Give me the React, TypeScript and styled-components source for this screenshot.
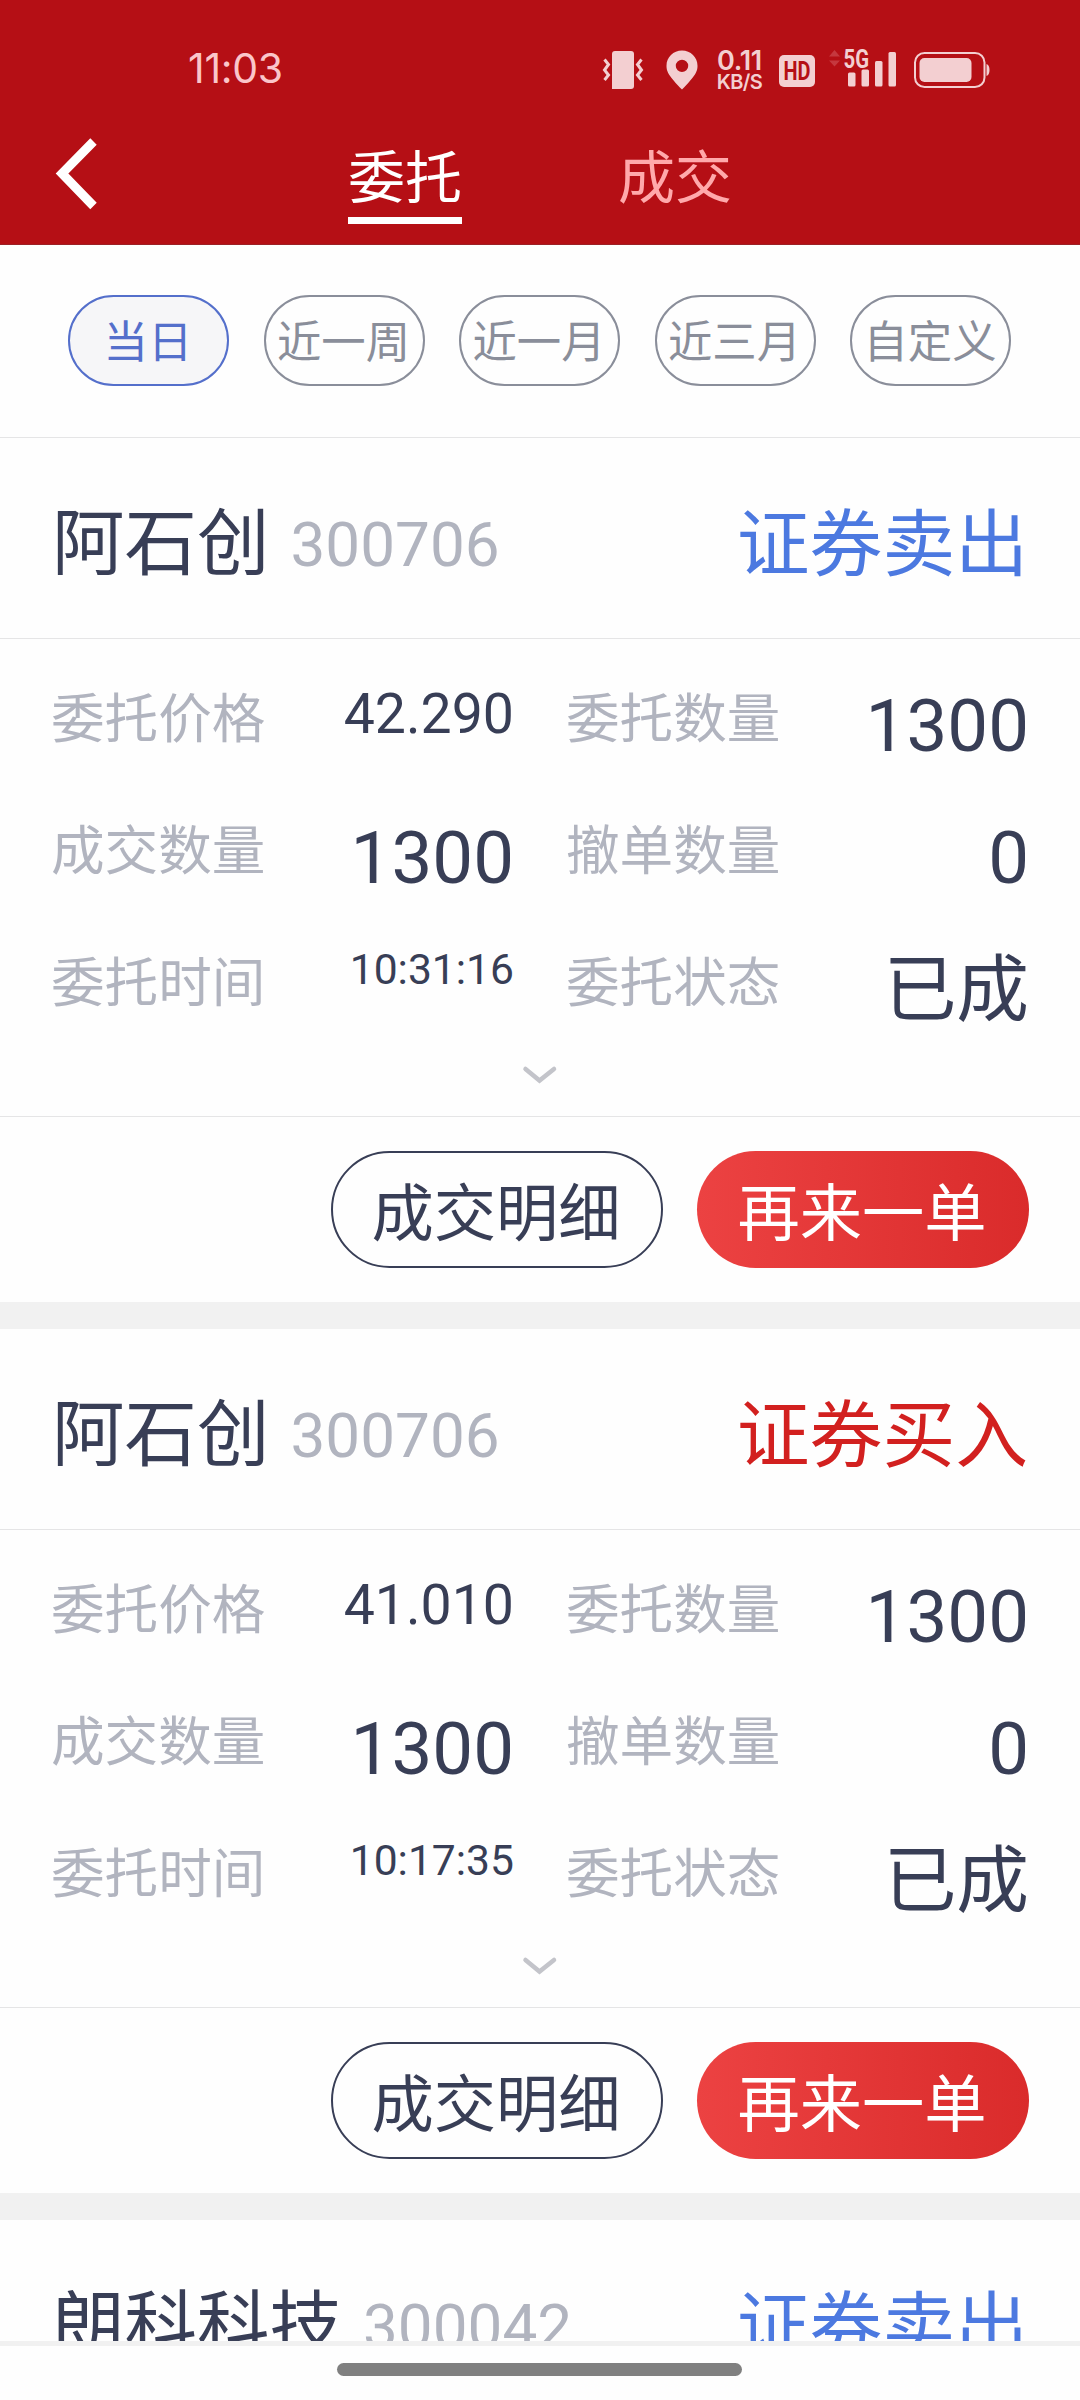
import React from "react";
import styled, { createGlobalStyle } from "styled-components";

const color = {
  brand: "#b50f15",
  status: "#f3cfd1",
  ink: "#383e56",
  muted: "#b1b4bf",
  line: "#e5e5e6",
  gap: "#f1f1f1",
  sell: "#4c79e0",
  buy: "#d2201f",
  chip: "#8a8e9a",
  chipActive: "#546fcb",
};

const GlobalStyle = createGlobalStyle`
  * { box-sizing: border-box; }
  body {
    margin: 0;
    background: #fefefe;
    font-family: Roboto, "Noto Sans CJK SC", sans-serif;
    -webkit-font-smoothing: antialiased;
  }
  button { font-family: inherit; padding: 0; margin: 0; background: none; border: 0; }
`;

const Screen = styled.div`
  width: 1080px;
  height: 2400px;
  display: flex;
  flex-direction: column;
  overflow: hidden;
  background: #fefefe;
`;

const Header = styled.header`
  height: 245px;
  flex: none;
  background: ${color.brand};
  border-bottom: 1px solid #9c2126;
`;

const StatusBar = styled.div`
  height: 130px;
  padding: 9px 89px 0 188px;
  display: flex;
  align-items: center;
  justify-content: space-between;
  color: ${color.status};
`;

const Clock = styled.span`
  font: 400 41px/60px Inter, sans-serif;
  letter-spacing: -0.3px;
  margin-bottom: 3px;
  color: #fbc6ca;
`;

const StatusIcons = styled.div`
  display: flex;
  align-items: center;
  height: 44px;
`;

const Glyph = styled.svg<{ $left?: number; $top?: number }>`
  display: block;
  flex: none;
  overflow: visible;
  margin-left: ${(p) => p.$left ?? 0}px;
  margin-top: ${(p) => p.$top ?? 0}px;
`;

const NetSpeed = styled.div`
  margin-left: 17px;
  margin-top: 3px;
  width: 49px;
  display: flex;
  flex-direction: column;
  align-items: center;
  font-family: Inter, sans-serif;
  font-weight: 600;
`;

const SpeedValue = styled.span`
  font-size: 27px;
  line-height: 23px;
  letter-spacing: -0.3px;
`;

const SpeedUnit = styled.span`
  font-size: 20px;
  line-height: 21px;
  letter-spacing: -0.6px;
`;

const NavBar = styled.div`
  height: 114px;
  padding-left: 54px;
  display: flex;
  align-items: flex-start;
`;

const BackButton = styled.button`
  width: 46px;
  height: 74px;
  margin-top: 7px;
`;

const Tabs = styled.div`
  margin-left: 248px;
  display: flex;
  gap: 156px;
`;

const Tab = styled.button<{ $active?: boolean }>`
  width: 114px;
  height: 94px;
  padding-top: 11px;
  font-size: 57px;
  line-height: 76px;
  white-space: nowrap;
  color: ${(p) => (p.$active ? "#fff" : "#ffa9ab")};
  border-bottom: 7px solid ${(p) => (p.$active ? "#fff" : "transparent")};
`;

const Filters = styled.div`
  height: 193px;
  flex: none;
  padding: 50px 69px 0 68px;
  display: flex;
  justify-content: space-between;
  align-items: flex-start;
  border-bottom: 1px solid ${color.line};
`;

const Chip = styled.button<{ $active?: boolean }>`
  width: 161px;
  height: 91px;
  border: 2px solid ${(p) => (p.$active ? color.chipActive : color.chip)};
  border-radius: 46px;
  background: ${(p) => (p.$active ? "#f6f6f8" : "transparent")};
  color: ${(p) => (p.$active ? color.chipActive : color.chip)};
  font-size: 44.4px;
  line-height: 81px;
  padding-top: 6px;
  padding-right: 1px;
  white-space: nowrap;
  display: flex;
  justify-content: center;
  align-items: flex-start;
`;

const Orders = styled.main`
  height: 1903px;
  flex: none;
  overflow: hidden;
`;

const Card = styled.article`
  border-bottom: 27px solid ${color.gap};
`;

const CardHead = styled.div`
  height: 201px;
  padding: 14px 52px 0;
  display: flex;
  align-items: center;
  justify-content: space-between;
  border-bottom: 1px solid ${color.line};
`;

const Stock = styled.div`
  display: flex;
  align-items: center;
  gap: 21px;
`;

const StockName = styled.span`
  font-size: 72.5px;
  line-height: 100px;
  color: ${color.ink};
`;

const StockCode = styled.span`
  font-size: 62px;
  line-height: 100px;
  color: ${color.muted};
`;

const Side = styled.span<{ $kind: "sell" | "buy" }>`
  font-size: 72.8px;
  line-height: 98px;
  margin-bottom: 1px;
  color: ${(p) => color[p.$kind]};
`;

const Details = styled.div`
  height: 478px;
  padding: 35px 51px 0;
  border-bottom: 1px solid ${color.line};
`;

const FieldGrid = styled.div`
  display: grid;
  grid-template-columns: 463px 463px;
  grid-auto-rows: 132.2px;
  column-gap: 52px;
  height: 391px;
`;

const Field = styled.div`
  display: flex;
  justify-content: space-between;
  align-items: flex-start;
`;

const FieldLabel = styled.span`
  font-size: 53.6px;
  line-height: 1.7;
  color: ${color.muted};
`;

const FieldValue = styled.span<{ $size: number }>`
  font-size: ${(p) => p.$size}px;
  line-height: 1.43;
  padding-top: 1px;
  color: ${color.ink};
`;

const Expand = styled.button`
  display: flex;
  justify-content: center;
  width: 100%;
`;

const Actions = styled.div`
  height: 185px;
  padding: 34px 51px 0;
  display: flex;
  justify-content: flex-end;
  gap: 34px;
`;

const Action = styled.button<{ $primary?: boolean }>`
  width: 332px;
  height: 117px;
  border-radius: 59px;
  border: ${(p) => (p.$primary ? "0" : `2px solid ${color.ink}`)};
  background: ${(p) => (p.$primary ? "linear-gradient(90deg, #ec4242, #da2b2b)" : "transparent")};
  color: ${(p) => (p.$primary ? "#fff" : color.ink)};
  font-size: 62.3px;
  line-height: 100px;
  padding-top: 11px;
  padding-right: 2px;
  white-space: nowrap;
`;

const SystemNav = styled.footer`
  height: 59px;
  flex: none;
  border-top: 5px solid ${color.gap};
  padding: 17px 1px 0 0;
  display: flex;
  justify-content: center;
  align-items: flex-start;
`;

const HomeHandle = styled.div`
  width: 405px;
  height: 13px;
  border-radius: 7px;
  background: #808080;
`;

interface Order {
  name: string;
  code: string;
  side: "sell" | "buy";
  price: string;
  time: string;
}

const orders: Order[] = [
  { name: "阿石创", code: "300706", side: "sell", price: "42.290", time: "10:31:16" },
  { name: "阿石创", code: "300706", side: "buy", price: "41.010", time: "10:17:35" },
  { name: "朗科科技", code: "300042", side: "sell", price: "", time: "" },
];

const filters = ["当日", "近一周", "近一月", "近三月", "自定义"];

function PhoneStatus() {
  return (
    <StatusBar>
      <Clock>11:03</Clock>
      <StatusIcons>
        <Glyph width="42" height="40" viewBox="0 0 42 40" fill="none">
          <path d="M9 4a3 3 0 0 1 3-3h16a3 3 0 0 1 3 3v32a3 3 0 0 1-3 3H9z" fill="currentColor" />
          <path d="M1.500 9.500l4 5-4 5.500 4 5-4 5M38.500 9.500l-4 5 4 5.500-4 5 4 5" stroke="currentColor" strokeWidth="3" />
        </Glyph>
        <Glyph $left={21} width="32" height="40" viewBox="0 0 32 40">
          <path
            fillRule="evenodd"
            fill="currentColor"
            d="M16 .5C7.300.5.500 7.200.500 15.700.500 22 3 26 16 39.500 29 26 31.500 22 31.500 15.700 31.500 7.200 24.700.5 16 .5zM16 9.700a6.200 6.200 0 1 1 0 12.400 6.200 6.200 0 0 1 0-12.400z"
          />
        </Glyph>
        <NetSpeed>
          <SpeedValue>0.11</SpeedValue>
          <SpeedUnit>KB/S</SpeedUnit>
        </NetSpeed>
        <Glyph $left={15} $top={3} width="36" height="32" viewBox="0 0 36 32">
          <rect width="36" height="32" rx="5" fill="currentColor" />
          <text x="4.500" y="25" textLength="27" lengthAdjust="spacingAndGlyphs" fontFamily="Roboto, sans-serif" fontWeight="700" fontSize="26" fill={color.brand}>HD</text>
        </Glyph>
        <Glyph $left={14} width="68" height="40" viewBox="0 0 68 40">
          <path d="M0 6.500L5.500 0 11 6.500zM0 10.500h11L5.500 16.500z" fill="#c5383e" />
          <text x="14.500" y="18" textLength="25.500" lengthAdjust="spacingAndGlyphs" fontFamily="Roboto, sans-serif" fontWeight="700" fontSize="25" fill="currentColor">5G</text>
          <g fill="currentColor">
            <rect x="19" y="22.500" width="7.500" height="14" rx="1.500" />
            <rect x="32.500" y="19.500" width="7.500" height="17" rx="1.500" />
            <rect x="46" y="11" width="7.500" height="25.500" rx="1.500" />
            <rect x="59.500" y="2" width="7.500" height="34.500" rx="1.500" />
          </g>
        </Glyph>
        <Glyph $left={17} width="77" height="36" viewBox="0 0 77 36">
          <rect x="1" y="1" width="69.500" height="34" rx="9.500" fill="none" stroke="currentColor" strokeWidth="2" />
          <rect x="5.500" y="6" width="52" height="24" rx="5" fill="currentColor" />
          <path d="M72.500 12q3 1 3 6t-3 6z" fill="currentColor" />
        </Glyph>
      </StatusIcons>
    </StatusBar>
  );
}

function OrderCard({ order }: { order: Order }) {
  return (
    <Card>
      <CardHead>
        <Stock>
          <StockName>{order.name}</StockName>
          <StockCode>{order.code}</StockCode>
        </Stock>
        <Side $kind={order.side}>{order.side === "sell" ? "证券卖出" : "证券买入"}</Side>
      </CardHead>
      {order.price && (
        <>
          <Details>
            <FieldGrid>
              <Field>
                <FieldLabel>委托价格</FieldLabel>
                <FieldValue $size={55.4}>{order.price}</FieldValue>
              </Field>
              <Field>
                <FieldLabel>委托数量</FieldLabel>
                <FieldValue $size={72.7}>1300</FieldValue>
              </Field>
              <Field>
                <FieldLabel>成交数量</FieldLabel>
                <FieldValue $size={72.7}>1300</FieldValue>
              </Field>
              <Field>
                <FieldLabel>撤单数量</FieldLabel>
                <FieldValue $size={72.7}>0</FieldValue>
              </Field>
              <Field>
                <FieldLabel>委托时间</FieldLabel>
                <FieldValue $size={42.6}>{order.time}</FieldValue>
              </Field>
              <Field>
                <FieldLabel>委托状态</FieldLabel>
                <FieldValue $size={72.7}>已成</FieldValue>
              </Field>
            </FieldGrid>
            <Expand aria-label="展开">
              <Glyph width="36" height="20" viewBox="0 0 36 20" fill="none">
                <path d="M3.500 4l14 11.500L32 4" stroke="#c3c4ca" strokeWidth="4.500" strokeLinecap="round" />
              </Glyph>
            </Expand>
          </Details>
          <Actions>
            <Action>成交明细</Action>
            <Action $primary>再来一单</Action>
          </Actions>
        </>
      )}
    </Card>
  );
}

export default function App() {
  return (
    <Screen>
      <GlobalStyle />
      <Header>
        <PhoneStatus />
        <NavBar>
          <BackButton aria-label="返回">
            <Glyph width="46" height="74" viewBox="0 0 46 74" fill="none">
              <path d="M39.500 4.500L8 36.500l31.500 32.500" stroke="#fff" strokeWidth="9" />
            </Glyph>
          </BackButton>
          <Tabs>
            <Tab $active>委托</Tab>
            <Tab>成交</Tab>
          </Tabs>
        </NavBar>
      </Header>
      <Filters>
        {filters.map((label, i) => (
          <Chip key={label} $active={i === 0}>
            {label}
          </Chip>
        ))}
      </Filters>
      <Orders>
        {orders.map((order, i) => (
          <OrderCard key={i} order={order} />
        ))}
      </Orders>
      <SystemNav>
        <HomeHandle />
      </SystemNav>
    </Screen>
  );
}
